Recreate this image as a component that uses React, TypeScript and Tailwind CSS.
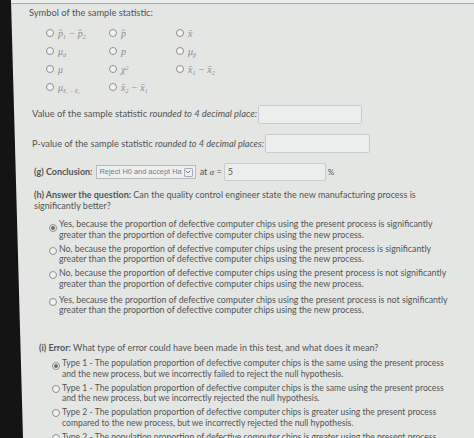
import React from "react";

const Radio = ({ checked = false }: { checked?: boolean }) => (
  <span className="inline-flex w-[8px] h-[8px] flex-shrink-0 rounded-full border border-[#8d8f8f] bg-[#f1f2f1] items-center justify-center">
    {checked && <span className="w-[4px] h-[4px] rounded-full bg-[#6a6c6c]" />}
  </span>
);

const M = ({ children }: { children: React.ReactNode }) => (
  <span className="italic text-[#8a8c8c] text-[10px]" style={{ fontFamily: "'Liberation Serif', serif" }}>
    {children}
  </span>
);

const Sub = ({ children }: { children: React.ReactNode }) => (
  <sub className="text-[6px] align-baseline relative top-[2px]">{children}</sub>
);

const SymbolOption = ({ children }: { children: React.ReactNode }) => (
  <div className="flex items-center gap-[4px] h-[18px]">
    <Radio />
    {children}
  </div>
);

const Choice = ({ checked = false, lines }: { checked?: boolean; lines: [string, string] }) => (
  <div className="flex items-start gap-[2px]">
    <span className="mt-[1px]">
      <Radio checked={checked} />
    </span>
    <div className="leading-[10.5px]">
      <div>{lines[0]}</div>
      <div>{lines[1]}</div>
    </div>
  </div>
);

const Box = ({ w }: { w: string }) => (
  <span className={`inline-block ${w} h-[19px] border border-[#c9cbca] bg-[#eceeed] rounded-[2px]`} />
);

export default function App() {
  return (
    <div className="relative w-[474px] h-[438px] overflow-hidden bg-[#141414]">
      <div
        className="h-full bg-[#e4e6e4] text-[#535555] text-[9px] [clip-path:polygon(11px_0,100%_0,100%_100%,23px_100%)]"
        style={{ fontFamily: "Lato, 'Open Sans', sans-serif" }}
      >
        <div className="h-[4px] bg-[#eceeed] border-b border-[#a8aaaa]" />

        <div className="pl-[29px] pt-[3px]">
          <div className="leading-[12px] text-[9.3px]">Symbol of the sample statistic:</div>

          <div className="mt-[5px] ml-[17px] grid grid-cols-[63px_67px_80px]">
            <SymbolOption>
              <M>
                p̂<Sub>1</Sub> − p̂<Sub>2</Sub>
              </M>
            </SymbolOption>
            <SymbolOption>
              <M>p̂</M>
            </SymbolOption>
            <SymbolOption>
              <M>x̄</M>
            </SymbolOption>

            <SymbolOption>
              <M>
                μ<Sub>d</Sub>
              </M>
            </SymbolOption>
            <SymbolOption>
              <M>p</M>
            </SymbolOption>
            <SymbolOption>
              <M>
                μ<Sub>p̂</Sub>
              </M>
            </SymbolOption>

            <SymbolOption>
              <M>μ</M>
            </SymbolOption>
            <SymbolOption>
              <M>
                χ<sup className="text-[6px] relative -top-[3px] align-baseline">2</sup>
              </M>
            </SymbolOption>
            <SymbolOption>
              <M>
                x̄<Sub>1</Sub> − x̄<Sub>2</Sub>
              </M>
            </SymbolOption>

            <SymbolOption>
              <M>
                μ<Sub>x̄₁ − x̄₂</Sub>
              </M>
            </SymbolOption>
            <SymbolOption>
              <M>
                x̄<Sub>2</Sub> − x̄<Sub>1</Sub>
              </M>
            </SymbolOption>
          </div>

          <div className="mt-[9px] ml-[3px] flex items-center gap-[1px] text-[9.4px]">
            <span>
              Value of the sample statistic <i>rounded to 4 decimal place:</i>
            </span>
            <Box w="w-[104px]" />
          </div>

          <div className="mt-[10px] ml-[3px] flex items-center gap-[1px] text-[9.2px]">
            <span>
              P-value of the sample statistic <i>rounded to 4 decimal places:</i>
            </span>
            <Box w="w-[105px]" />
          </div>

          <div className="mt-[10px] ml-[5px] flex items-center">
            <span className="font-bold">(g) Conclusion:</span>
            <span
              className="ml-[4px] inline-flex items-center h-[14px] px-[2px] border border-[#b9bbbb] bg-[#eef0ef] text-[7.4px] text-[#6b7d95]"
              style={{ fontFamily: "'Liberation Sans', Arial, sans-serif" }}
            >
              Reject H0 and accept Ha
              <span className="ml-[2px] inline-flex items-center justify-center w-[9px] h-[9px] border border-[#aab] rounded-[1px]">
                <svg width="6" height="4" viewBox="0 0 6 4">
                  <path d="M0.5 0.5 L3 3 L5.5 0.5" fill="none" stroke="#6b7d95" strokeWidth="1" />
                </svg>
              </span>
            </span>
            <span className="ml-[4px]">
              at <span className="italic" style={{ fontFamily: "'Liberation Serif', serif" }}>α</span> =
            </span>
            <span className="ml-[2px] inline-flex items-center w-[102px] h-[18px] border border-[#c9cbca] bg-[#eceeed] pl-[3px] rounded-[2px]">
              5
            </span>
            <span className="ml-[2px] text-[8px]">%</span>
          </div>

          <div className="mt-[8px] ml-[5px] leading-[11px]">
            <div>
              <span className="font-bold">(h) Answer the question:</span> Can the quality control engineer state the new manufacturing process is
            </div>
            <div>significantly better?</div>
          </div>

          <div className="mt-[8px] ml-[20px] flex flex-col gap-[3.5px] text-[8.8px]">
            <Choice
              checked
              lines={[
                "Yes, because the proportion of defective computer chips using the present process is significantly",
                "greater than the proportion of defective computer chips using the new process.",
              ]}
            />
            <Choice
              lines={[
                "No, because the proportion of defective computer chips using the present process is significantly",
                "greater than the proportion of defective computer chips using the new process.",
              ]}
            />
            <Choice
              lines={[
                "No, because the proportion of defective computer chips using the present process is not significantly",
                "greater than the proportion of defective computer chips using the new process.",
              ]}
            />
            <div className="mt-[2px]">
              <Choice
                lines={[
                  "Yes, because the proportion of defective computer chips using the present process is not significantly",
                  "greater than the proportion of defective computer chips using the new process.",
                ]}
              />
            </div>
          </div>

          <div className="mt-[25px] ml-[10px]">
            <span className="font-bold">(i) Error:</span> What type of error could have been made in this test, and what does it mean?
          </div>

          <div className="mt-[4px] ml-[23px] flex flex-col gap-[3.5px] text-[8.6px]">
            <Choice
              checked
              lines={[
                "Type 1 - The population proportion of defective computer chips is the same using the present process",
                "and the new process, but we incorrectly failed to reject the null hypothesis.",
              ]}
            />
            <Choice
              lines={[
                "Type 1 - The population proportion of defective computer chips is the same using the present process",
                "and the new process, but we incorrectly rejected the null hypothesis.",
              ]}
            />
            <Choice
              lines={[
                "Type 2 - The population proportion of defective computer chips is greater using the present process",
                "compared to the new process, but we incorrectly rejected the null hypothesis.",
              ]}
            />
            <Choice
              lines={[
                "Type 2 - The population proportion of defective computer chips is greater using the present process",
                "compared to the new process, but we incorrectly failed to reject the null hypothesis.",
              ]}
            />
          </div>
        </div>
      </div>
    </div>
  );
}
